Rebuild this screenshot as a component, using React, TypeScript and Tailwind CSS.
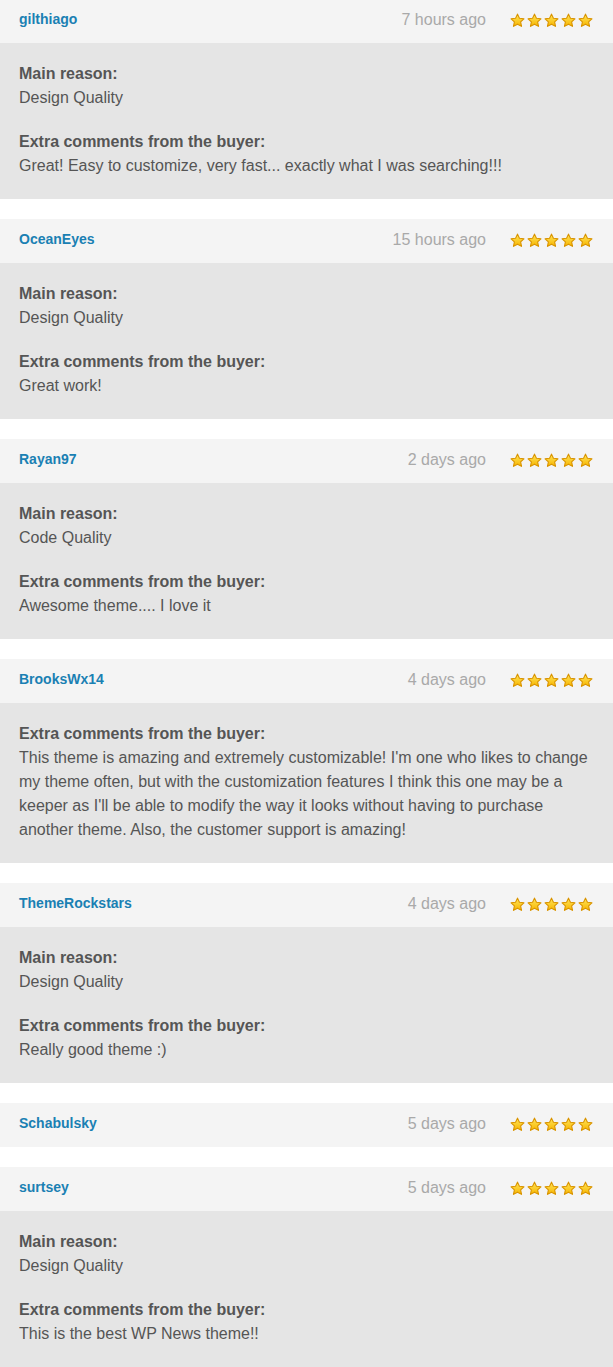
import React from 'react';

type Review = {
  user: string;
  time: string;
  reason?: string;
  comment?: string;
};

const REVIEWS: Review[] = [
  { user: 'gilthiago', time: '7 hours ago', reason: 'Design Quality', comment: 'Great! Easy to customize, very fast... exactly what I was searching!!!' },
  { user: 'OceanEyes', time: '15 hours ago', reason: 'Design Quality', comment: 'Great work!' },
  { user: 'Rayan97', time: '2 days ago', reason: 'Code Quality', comment: 'Awesome theme.... I love it' },
  {
    user: 'BrooksWx14',
    time: '4 days ago',
    comment:
      "This theme is amazing and extremely customizable! I'm one who likes to change my theme often, but with the customization features I think this one may be a keeper as I'll be able to modify the way it looks without having to purchase another theme. Also, the customer support is amazing!",
  },
  { user: 'ThemeRockstars', time: '4 days ago', reason: 'Design Quality', comment: 'Really good theme :)' },
  { user: 'Schabulsky', time: '5 days ago' },
  { user: 'surtsey', time: '5 days ago', reason: 'Design Quality', comment: 'This is the best WP News theme!!' },
];

const Star: React.FC = () => (
  <svg width="15" height="15" viewBox="0 0 24 24" className="block">
    <defs>
      <linearGradient id="starFill" x1="0" y1="0" x2="0" y2="1">
        <stop offset="0%" stopColor="#ffe65a" />
        <stop offset="100%" stopColor="#f7b500" />
      </linearGradient>
    </defs>
    <path
      d="M12 1.8l3.1 6.6 7.2.9-5.3 5 1.4 7.1L12 17.9l-6.4 3.5 1.4-7.1-5.3-5 7.2-.9z"
      fill="url(#starFill)"
      stroke="#d99400"
      strokeWidth="1.8"
      strokeLinejoin="round"
    />
  </svg>
);

const ReviewCard: React.FC<{ review: Review }> = ({ review }) => {
  const hasBody = review.reason || review.comment;
  return (
    <div className="mb-5">
      {/* Header */}
      <div className="h-11 bg-[#f4f4f4] flex items-center pl-[19px] pr-5">
        <span className="text-[14px] font-bold text-[#1a80b3] -mt-1">{review.user}</span>
        <span className="ml-auto text-[16px] text-[#a9a9a9] -mt-0.5">{review.time}</span>
        <div className="flex gap-[2px] ml-6 -mt-0.5">
          {[0, 1, 2, 3, 4].map(i => (
            <Star key={i} />
          ))}
        </div>
      </div>

      {/* Body */}
      {hasBody && (
        <div className="bg-[#e5e5e5] pl-[19px] pr-5 pt-[19px] pb-[21px] text-[16px] leading-6 text-[#555]">
          {review.reason && (
            <div className="mb-5">
              <p className="font-bold">Main reason:</p>
              <p>{review.reason}</p>
            </div>
          )}
          {review.comment && (
            <div>
              <p className="font-bold">Extra comments from the buyer:</p>
              <p>{review.comment}</p>
            </div>
          )}
        </div>
      )}
    </div>
  );
};

export default function App() {
  return (
    <div className="w-[613px] bg-white -mt-px font-['Liberation_Sans',Arial,sans-serif]">
      {REVIEWS.map(r => (
        <ReviewCard key={r.user} review={r} />
      ))}
    </div>
  );
}
